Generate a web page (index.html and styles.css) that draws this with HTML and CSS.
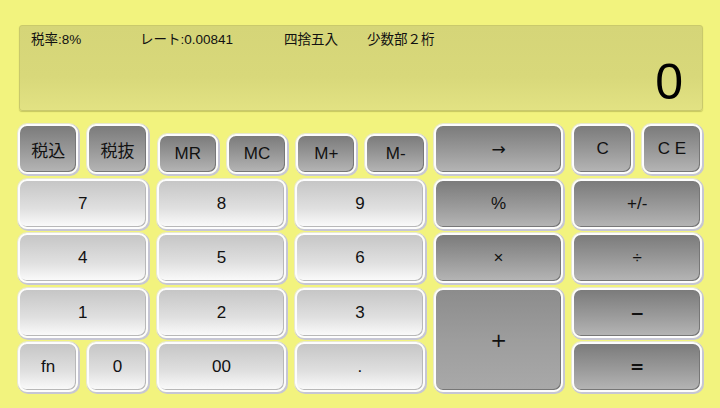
FILE: index.html
```html
<!DOCTYPE html>
<html lang="ja">
<head>
<meta charset="utf-8">
<link rel="stylesheet" href="styles.css">
</head>
<body>
<div class="app">
  <div class="display">
    <div class="info">
      <span class="i1">税率:8%</span>
      <span class="i2">レート:0.00841</span>
      <span class="i3">四捨五入</span>
      <span class="i4">少数部２桁</span>
    </div>
    <div class="value">0</div>
  </div>
  <div class="keys">
    <div class="pair"><div class="key dark">税込</div><div class="key dark">税抜</div></div>
    <div class="pair mem"><div class="key dark">MR</div><div class="key dark">MC</div></div>
    <div class="pair mem"><div class="key dark">M+</div><div class="key dark">M-</div></div>
    <div class="key dark arrow">→</div>
    <div class="pair"><div class="key dark">C</div><div class="key dark">C E</div></div>

    <div class="key light">7</div>
    <div class="key light">8</div>
    <div class="key light">9</div>
    <div class="key dark">%</div>
    <div class="key dark">+/-</div>

    <div class="key light">4</div>
    <div class="key light">5</div>
    <div class="key light">6</div>
    <div class="key dark">×</div>
    <div class="key dark">÷</div>

    <div class="key light">1</div>
    <div class="key light">2</div>
    <div class="key light">3</div>
    <div class="key dark plus">+</div>
    <div class="key dark heavy">−</div>

    <div class="pair"><div class="key light">fn</div><div class="key light">0</div></div>
    <div class="key light">00</div>
    <div class="key light">.</div>
    <div class="key dark heavy">=</div>
  </div>
</div>
</body>
</html>
```

FILE: styles.css
```css
html, body {
  margin: 0;
  padding: 0;
  background: #f2f37e;
  width: 720px;
  height: 408px;
  overflow: hidden;
}
body {
  font-family: "Liberation Sans", "Noto Sans CJK JP", sans-serif;
  color: #111;
}
.app {
  padding: 25px 17px 0 18px;
}
.display {
  margin-left: 1px;
  height: 84px;
  border: 1px solid #c9c96c;
  border-radius: 3px;
  background: linear-gradient(#d5d578, #d8d87a 60%, #e2e283);
  box-shadow: 0 1px 1px rgba(120,120,40,0.35);
}
.info {
  display: flex;
  padding: 6px 0 0 11px;
  font-size: 13.5px;
  line-height: 16px;
}
.i1 { width: 109px; }
.i2 { width: 144px; }
.i3 { width: 83px; }
.value {
  text-align: right;
  font-size: 50px;
  line-height: 50px;
  padding-right: 19px;
  margin-top: 9px;
  color: #000;
}
.keys {
  margin-top: 13px;
  display: grid;
  grid-template-columns: repeat(5, 129.6px);
  grid-template-rows: repeat(5, 50px);
  column-gap: 9px;
  row-gap: 4.5px;
}
.pair {
  display: grid;
  grid-template-columns: 1fr 1fr;
  column-gap: 9px;
}
.mem {
  padding-top: 10px;
  padding-left: 1px;
  margin-right: -1px;
}
.key {
  box-sizing: border-box;
  display: flex;
  align-items: center;
  justify-content: center;
  font-size: 17px;
  border: 2px solid #fdfdfd;
  border-radius: 9px;
  height: 100%;
}
.light {
  background: linear-gradient(#c6c6c6, #e0e0e0 60%, #fbfbfb);
  box-shadow: inset -1px -1px 0 #b8b8b8, 1px 1px 0 1px #c6c6d4, 0 0 0 1px #e8e8d0;
}
.dark {
  background: linear-gradient(#7b7b7b, #9a9a9a 55%, #b5b5b5);
  box-shadow: inset -1px -1px 0 #777, 1px 1px 0 1px #c6c6d4, 0 0 0 1px #e8e8d0;
}
.arrow {
  font-family: "DejaVu Sans", sans-serif;
  font-size: 17px;
}
.plus {
  grid-row: span 2;
  background: linear-gradient(#8c8c8c, #9d9d9d 50%, #a9a9a9);
  font-family: "DejaVu Sans", sans-serif;
  font-size: 20px;
}
.heavy {
  font-family: "DejaVu Sans", sans-serif;
  font-weight: bold;
  font-size: 17px;
}
```
